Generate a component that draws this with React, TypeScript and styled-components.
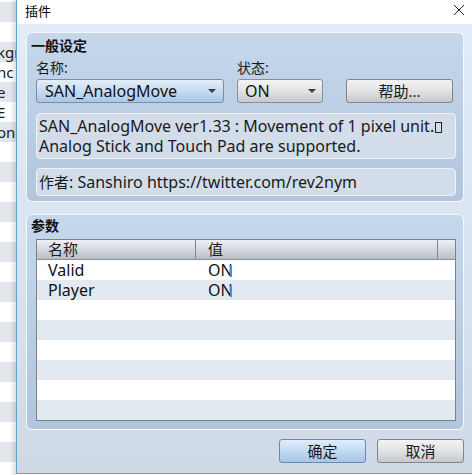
import React from "react";
import styled, { createGlobalStyle } from "styled-components";

const Global = createGlobalStyle`
  html, body { margin: 0; padding: 0; background: #ffffff; overflow: hidden; }
  body { font-family: "Noto Sans", "Noto Sans CJK SC", sans-serif; color: #1a1a1a; }
  * { box-sizing: border-box; }
`;

const Screen = styled.div`
  display: flex;
  width: 472px;
  height: 475px;
  background: #ffffff;
`;

const BackWindow = styled.div`
  position: relative;
  width: 16px;
  flex: none;
  display: flex;
  flex-direction: column;
  padding-top: 2px;
  overflow: hidden;
  &::after {
    content: "";
    position: absolute;
    top: 0;
    bottom: 0;
    right: 0;
    width: 6px;
    background: linear-gradient(to right, rgba(0, 0, 0, 0), rgba(0, 0, 0, 0.12));
  }
`;

const BackRow = styled.div<{ $alt: boolean }>`
  height: 20px;
  flex: none;
  display: flex;
  align-items: center;
  white-space: nowrap;
  font-size: 15px;
  line-height: 20px;
  color: #1a1a1a;
  background: ${(p) => (p.$alt ? "#e2e6ec" : "#ffffff")};
  & > span { margin-left: -3px; }
`;

const Dialog = styled.div`
  flex: 1;
  display: flex;
  flex-direction: column;
  height: 474px;
  border-left: 1px solid #5fa4c9;
  border-bottom: 1px solid #5fa4c9;
`;

const TitleBar = styled.div`
  height: 24px;
  flex: none;
  display: flex;
  align-items: center;
  justify-content: space-between;
  padding: 0 7px 4px 8px;
  background: #ffffff;
  font-size: 13px;
  color: #000;
`;

const Body = styled.div`
  flex: 1;
  display: flex;
  flex-direction: column;
  padding: 8px 8px 10px 9px;
  background: linear-gradient(#e2edf9, #cfdae6);
`;

const Group = styled.div<{ $top: number; $height: number }>`
  height: ${(p) => p.$height}px;
  flex: none;
  display: flex;
  flex-direction: column;
  padding: ${(p) => p.$top}px 7px 0 9px;
  border: 1px solid rgba(255, 255, 255, 0.85);
  border-radius: 6px;
  background: linear-gradient(#c5d7eb, #b1c5dc);
  & + & { margin-top: 12px; }
`;

const GroupTitle = styled.div`
  margin-left: -5px;
  height: 18px;
  line-height: 18px;
  font-size: 14px;
  font-weight: bold;
  color: #111;
`;

const SettingsGrid = styled.div`
  display: grid;
  grid-template-columns: 188px 86px 117px;
  column-gap: 13px;
  row-gap: 3px;
  margin-top: 5px;
`;

const FieldLabel = styled.div`
  height: 16px;
  line-height: 16px;
  font-size: 14px;
  color: #1a1a1a;
`;

const ComboBox = styled.div<{ $blue?: boolean; $pad: number; $arrow: number }>`
  height: 24px;
  display: flex;
  align-items: center;
  justify-content: space-between;
  padding: 0 ${(p) => p.$arrow}px 0 ${(p) => p.$pad}px;
  border: 1px solid ${(p) => (p.$blue ? "#7a8ea9" : "#8a8f95")};
  border-radius: 3px;
  background: ${(p) =>
    p.$blue
      ? "linear-gradient(#e3eefb, #c6dbf2 50%, #a9c7e9)"
      : "linear-gradient(#f4f4f4, #e2e3e5 50%, #c6c9cd)"};
  font-size: 16px;
  color: #111;
`;

const Arrow = styled.span`
  width: 0;
  height: 0;
  border-left: 4px solid transparent;
  border-right: 4px solid transparent;
  border-top: 4px solid #3c3c3c;
`;

const PushButton = styled.button<{ $blue?: boolean; $width: number }>`
  width: ${(p) => p.$width}px;
  height: 24px;
  padding: 0;
  justify-self: end;
  border: 1px solid ${(p) => (p.$blue ? "#6f89ad" : "#80858b")};
  border-radius: 3px;
  background: ${(p) =>
    p.$blue
      ? "linear-gradient(#e0edfb, #c2d9f2 50%, #a7c6e9)"
      : "linear-gradient(#f4f4f4, #e1e2e4 50%, #c5c8cc)"};
  font-family: "Noto Sans", "Noto Sans CJK SC", sans-serif;
  font-size: 15px;
  color: #1a1a1a;
  line-height: 22px;
`;

const InfoBox = styled.div<{ $gap: number; $pad: string }>`
  margin-top: ${(p) => p.$gap}px;
  padding: ${(p) => p.$pad};
  border: 1px solid #edf2f8;
  border-radius: 4px;
  background: #d2dde9;
  font-size: 16px;
  line-height: 20px;
  color: #1a1a1a;
  white-space: nowrap;
`;

const CjkText = styled.span`
  font-size: 15px;
`;

const Tofu = styled.span`
  display: inline-block;
  width: 7px;
  height: 11px;
  margin-left: 1px;
  border: 1px solid #222;
  vertical-align: -1px;
`;

const Table = styled.div`
  margin-top: 4px;
  border: 1px solid #7b8189;
  background: #ffffff;
  display: flex;
  flex-direction: column;
`;

const HeaderRow = styled.div`
  display: grid;
  grid-template-columns: 159px 242px 1fr;
  height: 20px;
  border-bottom: 1px solid #8a9096;
  background: linear-gradient(#eef1f4, #d4d9de 50%, #b7bec6);
`;

const HeaderCell = styled.div<{ $pad: number; $sep?: boolean }>`
  padding-left: ${(p) => p.$pad}px;
  border-right: ${(p) => (p.$sep ? "1px solid #80868d" : "none")};
  font-size: 15px;
  line-height: 19px;
  color: #1a1a1a;
`;

const DataRow = styled.div<{ $alt: boolean }>`
  display: grid;
  grid-template-columns: 159px 242px 1fr;
  height: 20px;
  background: ${(p) => (p.$alt ? "#e3e9f0" : "#ffffff")};
`;

const DataCell = styled.div<{ $pad: number }>`
  position: relative;
  padding-left: ${(p) => p.$pad}px;
  font-size: 16px;
  line-height: 20px;
  color: #111;
`;

const Caret = styled.span`
  position: absolute;
  left: 34px;
  top: 6px;
  width: 2px;
  height: 11px;
  background: #3b93e8;
`;

const Footer = styled.div`
  margin-top: 9px;
  display: flex;
  justify-content: flex-end;
  gap: 11px;
`;

const backRows = ["", "", "kgr", "nc", "e", "E", "on"];

const params = [
  { name: "Valid", value: "ON" },
  { name: "Player", value: "ON" },
  { name: "", value: "" },
  { name: "", value: "" },
  { name: "", value: "" },
  { name: "", value: "" },
  { name: "", value: "" },
  { name: "", value: "" },
];

export default function App() {
  const back = Array.from({ length: 24 }, (_, i) => backRows[i] ?? "");
  return (
    <>
      <Global />
      <Screen>
        <BackWindow>
          {back.map((t, i) => (
            <BackRow key={i} $alt={i % 2 === 0}>
              <span>{t}</span>
            </BackRow>
          ))}
        </BackWindow>
        <Dialog>
          <TitleBar>
            <span>插件</span>
            <svg width="12" height="12" viewBox="0 0 12 12">
              <path d="M1 1 L11 11 M11 1 L1 11" stroke="#222" strokeWidth="1" fill="none" />
            </svg>
          </TitleBar>
          <Body>
            <Group $top={4} $height={170}>
              <GroupTitle>一般设定</GroupTitle>
              <SettingsGrid>
                <FieldLabel>名称:</FieldLabel>
                <FieldLabel>状态:</FieldLabel>
                <div />
                <ComboBox $blue $pad={8} $arrow={7}>
                  <span>SAN_AnalogMove</span>
                  <Arrow />
                </ComboBox>
                <ComboBox $pad={7} $arrow={6}>
                  <span>ON</span>
                  <Arrow />
                </ComboBox>
                <PushButton $width={107}>帮助...</PushButton>
              </SettingsGrid>
              <InfoBox $gap={10} $pad="2px 2px 2px 2px">
                SAN_AnalogMove ver1.33 : Movement of 1 pixel unit.
                <Tofu />
                <br />
                Analog Stick and Touch Pad are supported.
              </InfoBox>
              <InfoBox $gap={9} $pad="3px 2px">
                <CjkText>作者</CjkText>: Sanshiro https://twitter.com/rev2nym
              </InfoBox>
            </Group>
            <Group $top={2} $height={216}>
              <GroupTitle>参数</GroupTitle>
              <Table>
                <HeaderRow>
                  <HeaderCell $pad={11} $sep>名称</HeaderCell>
                  <HeaderCell $pad={12} $sep>值</HeaderCell>
                  <HeaderCell $pad={0} />
                </HeaderRow>
                {params.map((p, i) => (
                  <DataRow key={i} $alt={i % 2 === 1}>
                    <DataCell $pad={11}>{p.name}</DataCell>
                    <DataCell $pad={12}>
                      {p.value}
                      {p.value && <Caret />}
                    </DataCell>
                    <DataCell $pad={0} />
                  </DataRow>
                ))}
              </Table>
            </Group>
            <Footer>
              <PushButton $blue $width={87}>确定</PushButton>
              <PushButton $width={87}>取消</PushButton>
            </Footer>
          </Body>
        </Dialog>
      </Screen>
    </>
  );
}
